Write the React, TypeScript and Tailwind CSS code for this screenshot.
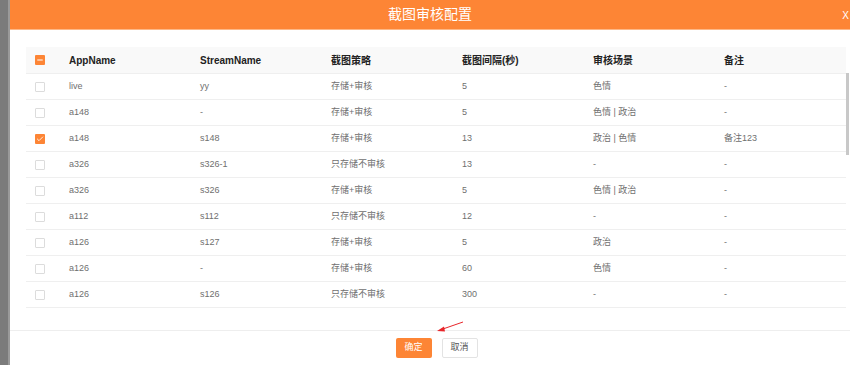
import { Check, Minus } from 'lucide-react';

const rows = [
  { app: 'live', stream: 'yy', policy: '存储+审核', interval: '5', scene: '色情', note: '-', checked: false },
  { app: 'a148', stream: '-', policy: '存储+审核', interval: '5', scene: '色情 | 政治', note: '-', checked: false },
  { app: 'a148', stream: 's148', policy: '存储+审核', interval: '13', scene: '政治 | 色情', note: '备注123', checked: true },
  { app: 'a326', stream: 's326-1', policy: '只存储不审核', interval: '13', scene: '-', note: '-', checked: false },
  { app: 'a326', stream: 's326', policy: '存储+审核', interval: '5', scene: '色情 | 政治', note: '-', checked: false },
  { app: 'a112', stream: 's112', policy: '只存储不审核', interval: '12', scene: '-', note: '-', checked: false },
  { app: 'a126', stream: 's127', policy: '存储+审核', interval: '5', scene: '政治', note: '-', checked: false },
  { app: 'a126', stream: '-', policy: '存储+审核', interval: '60', scene: '色情', note: '-', checked: false },
  { app: 'a126', stream: 's126', policy: '只存储不审核', interval: '300', scene: '-', note: '-', checked: false },
];

const headers = ['AppName', 'StreamName', '截图策略', '截图间隔(秒)', '审核场景', '备注'];

const Box = ({ state }: { state: 'off' | 'on' | 'some' }) => {
  if (state === 'off') {
    return <span className="block w-[10px] h-[10px] rounded-[1px] border border-[#dcdcdc] bg-white" />;
  }
  return (
    <span className="flex items-center justify-center w-[10px] h-[10px] rounded-[1px] bg-[#fd8535]">
      {state === 'on' ? (
        <Check className="w-[8px] h-[8px] text-white" strokeWidth={2.5} />
      ) : (
        <Minus className="w-[8px] h-[8px] text-white" strokeWidth={3} />
      )}
    </span>
  );
};

const App = () => {
  return (
    <div
      className="flex w-[850px] h-[365px] bg-[#7f7f7f] overflow-hidden"
      style={{ fontFamily: '"Liberation Sans", "Noto Sans CJK SC", sans-serif' }}
    >
      <div className="w-[8px] shrink-0 bg-[#7b7b7b]" />
      <div className="w-[2px] shrink-0 bg-[#9a9a9a]" />

      {/* Modal */}
      <div className="relative flex flex-col flex-1 bg-white">
        <header className="relative flex items-center justify-center h-[30px] shrink-0 bg-[#fd8535] border-b border-[#fdb887]">
          <span className="text-[14px] text-white">截图审核配置</span>
          <span className="absolute right-[1px] top-[8px] text-[10px] text-white">X</span>
        </header>

        {/* Body */}
        <div className="flex-1 pt-[17px] pl-[16px] pr-[4px]">
          <div className="flex h-[27px] items-center bg-[#f9f9f9] border-b border-[#efefef] text-[10px] font-bold text-[#222]">
            <div className="w-[43px] shrink-0 pl-[9px]">
              <Box state="some" />
            </div>
            {headers.map((h, i) => (
              <div key={h} className={i === 5 ? 'flex-1' : 'w-[131px] shrink-0'}>
                {h}
              </div>
            ))}
          </div>
          {rows.map((r, idx) => (
            <div
              key={idx}
              className="flex h-[26px] items-center border-b border-[#efefef] text-[9px] text-[#6f6f6f]"
            >
              <div className="w-[43px] shrink-0 pl-[9px]">
                <Box state={r.checked ? 'on' : 'off'} />
              </div>
              <div className="w-[131px] shrink-0">{r.app}</div>
              <div className="w-[131px] shrink-0">{r.stream}</div>
              <div className="w-[131px] shrink-0">{r.policy}</div>
              <div className="w-[131px] shrink-0">{r.interval}</div>
              <div className="w-[131px] shrink-0">{r.scene}</div>
              <div className="flex-1">{r.note}</div>
            </div>
          ))}
        </div>

        {/* scrollbar thumb */}
        <div className="absolute left-[836px] top-[73px] w-[3px] h-[82px] bg-[#c8c8c8]" />

        {/* Footer */}
        <footer className="flex h-[35px] shrink-0 items-center justify-center gap-[10px] border-t border-[#eeeeee] pl-[13px]">
          <button className="w-[36px] h-[20px] rounded-[2px] bg-[#fd8535] text-[9px] text-white">确定</button>
          <button className="w-[36px] h-[20px] rounded-[2px] border border-[#e3e3e3] bg-white text-[9px] text-[#555]">
            取消
          </button>
        </footer>

        {/* red arrow annotation */}
        <svg className="absolute left-[420px] top-[316px]" width="50" height="20" viewBox="0 0 50 20">
          <line x1="33" y1="6" x2="10" y2="14" stroke="#e8262b" strokeWidth="1" />
          <polygon points="7,15 14,10.5 15,15.5" fill="#e8262b" />
        </svg>
      </div>
    </div>
  );
};

export default App;
